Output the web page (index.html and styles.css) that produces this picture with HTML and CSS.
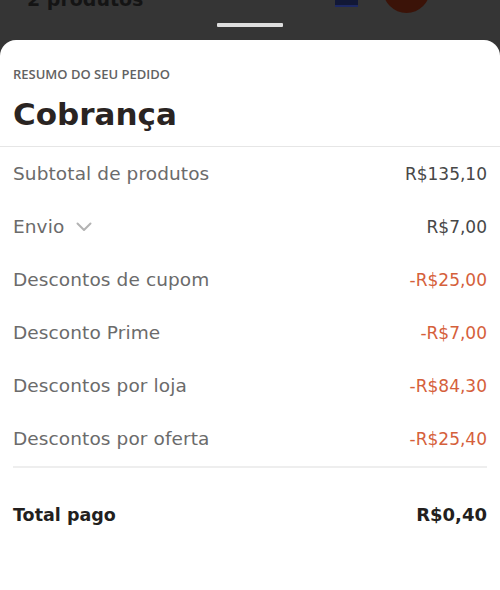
FILE: index.html
```html
<!DOCTYPE html>
<html lang="pt-BR">

<head>
  <meta charset="UTF-8">
  <meta name="viewport" content="width=device-width, initial-scale=1.0">
  <title>Resumo do pedido</title>
  <link rel="stylesheet" href="styles.css">
</head>

<body>
  <div class="backdrop">
    <div class="peek">
      <span class="peek-title">2 produtos</span>
      <span class="peek-flag"></span>
      <span class="peek-avatar"></span>
    </div>
    <div class="handle"></div>
  </div>

  <div class="sheet">
    <div class="sheet-head">
      <div class="eyebrow">RESUMO DO SEU PEDIDO</div>
      <h1 class="title">Cobrança</h1>
    </div>

    <div class="lines">
      <div class="line">
        <span class="label">Subtotal de produtos</span>
        <span class="value">R$135,10</span>
      </div>
      <div class="line">
        <span class="label">Envio
          <svg class="chevron" width="16" height="10" viewBox="0 0 16 10">
            <path d="M1.5 1.5 L8 8 L14.5 1.5" fill="none" stroke="#b3b3b3" stroke-width="2" stroke-linecap="round" stroke-linejoin="round" />
          </svg>
        </span>
        <span class="value">R$7,00</span>
      </div>
      <div class="line">
        <span class="label">Descontos de cupom</span>
        <span class="value discount">-R$25,00</span>
      </div>
      <div class="line">
        <span class="label">Desconto Prime</span>
        <span class="value discount">-R$7,00</span>
      </div>
      <div class="line">
        <span class="label">Descontos por loja</span>
        <span class="value discount">-R$84,30</span>
      </div>
      <div class="line">
        <span class="label">Descontos por oferta</span>
        <span class="value discount">-R$25,40</span>
      </div>
    </div>

    <div class="line total">
      <span class="label">Total pago</span>
      <span class="value">R$0,40</span>
    </div>
  </div>
</body>

</html>
```

FILE: styles.css
```css
html,
body {
  margin: 0;
  height: 590px;
  overflow: hidden;
}

body {
  background-color: #353535;
  font-family: "DejaVu Sans", "Open Sans", sans-serif;
}

.backdrop {
  position: relative;
  height: 40px;
  overflow: hidden;
}

/* page behind the sheet, only its bottom edge shows */
.peek {
  display: flex;
  align-items: flex-end;
  height: 13px;
  padding-left: 27px;
}

.peek-title {
  flex: 1;
  margin-bottom: 3px;
  font-size: 19px;
  font-weight: 600;
  line-height: 21px;
  color: #141414;
}

.peek-flag {
  width: 23px;
  height: 14px;
  margin-right: 25px;
  margin-bottom: 6px;
  box-sizing: border-box;
  background-color: #121836;
  border-bottom: 2px solid #1d2862;
}

.peek-avatar {
  width: 47px;
  height: 47px;
  margin-right: 70px;
  border-radius: 50%;
  background-color: #3b1308;
}

.handle {
  position: absolute;
  left: 217px;
  top: 23px;
  width: 66px;
  height: 4px;
  border-radius: 1px;
  background-color: #dedede;
}

.sheet {
  height: 550px;
  background-color: #fff;
  border-radius: 16px 16px 0 0;
}

.sheet-head {
  padding: 26px 13px 0;
  height: 80px;
  border-bottom: 1px solid #e6e6e6;
}

.eyebrow {
  font-family: "Open Sans", sans-serif;
  font-size: 13px;
  font-weight: 600;
  color: #626262;
  line-height: 16px;
}

.title {
  margin: 13px 0 0;
  font-size: 31px;
  font-weight: 700;
  line-height: 38px;
  color: #2a2422;
}

.lines {
  margin: 0 13px;
  padding-bottom: 1px;
  border-bottom: 2px solid #eeeeee;
}

.line {
  display: flex;
  justify-content: space-between;
  align-items: center;
  height: 53px;
}

.label {
  display: flex;
  align-items: center;
  font-size: 18.5px;
  letter-spacing: 0.1px;
  color: #6b6b6b;
}

.chevron {
  margin-left: 12px;
}

.value {
  font-size: 17px;
  color: #474747;
}

.discount {
  color: #d5603b;
}

.total {
  margin: 0 13px;
  height: 93px;
  font-weight: 700;
}

.total .label {
  font-size: 17.5px;
  letter-spacing: 0;
  color: #231f1e;
}

.total .value {
  font-size: 18px;
  color: #231f1e;
}
```
